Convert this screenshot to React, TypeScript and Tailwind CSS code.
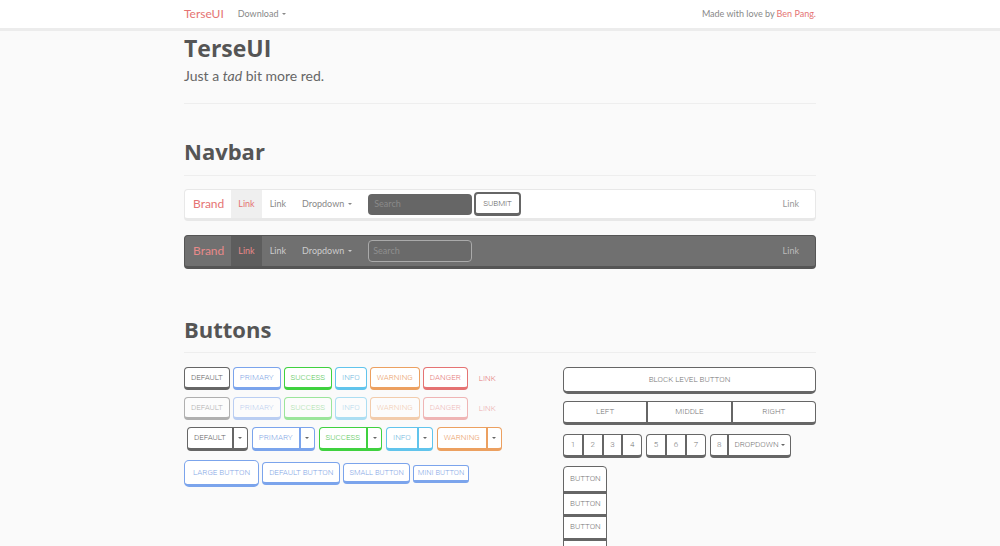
import React from "react";

const body = { fontFamily: "Lato, 'Noto Sans', sans-serif" };
const head = { fontFamily: "'Open Sans', 'Noto Sans', sans-serif" };
const btnFont = { fontFamily: "Roboto, 'Liberation Sans', sans-serif" };

const variants: Record<string, { border: string; text: string }> = {
  default: { border: "border-[#666]", text: "text-[#666]" },
  primary: { border: "border-[#7ba4ec]", text: "text-[#86a8e6]" },
  success: { border: "border-[#3fd13f]", text: "text-[#5bc95b]" },
  info: { border: "border-[#61c4ec]", text: "text-[#72b9e0]" },
  warning: { border: "border-[#eca060]", text: "text-[#eba06a]" },
  danger: { border: "border-[#e57373]", text: "text-[#e57b7b]" },
};

const sizes: Record<string, string> = {
  lg: "h-[27px] px-[8px] text-[8px] rounded-[5px]",
  md: "h-[23px] px-[6px] text-[8px] rounded-[4px]",
  sm: "h-[21px] px-[5px] text-[7.5px] rounded-[4px]",
  xs: "h-[18px] px-[4px] text-[7.5px] rounded-[3px]",
};

function Btn({
  label,
  v = "default",
  size = "md",
  faded = false,
}: {
  label: string;
  v?: string;
  size?: string;
  faded?: boolean;
}) {
  const c = variants[v];
  return (
    <button
      style={btnFont}
      className={`bg-white border-[1.5px] border-b-[3px] uppercase font-light flex items-center ${c.border} ${c.text} ${sizes[size]} ${faded ? "opacity-50" : ""}`}
    >
      {label}
    </button>
  );
}

function Caret({ className = "" }: { className?: string }) {
  return (
    <span
      className={`inline-block w-0 h-0 border-l-[2.5px] border-r-[2.5px] border-t-[2.5px] border-l-transparent border-r-transparent ${className}`}
    />
  );
}

function Split({ label, v }: { label: string; v: string }) {
  const c = variants[v];
  return (
    <div
      style={btnFont}
      className={`flex h-[24px] bg-white border-[1.5px] border-b-[3px] rounded-[4px] uppercase font-light text-[8px] ${c.border} ${c.text}`}
    >
      <span className="flex items-center px-[6px]">{label}</span>
      <span className={`flex items-center justify-center w-[15px] border-l-2 ${c.border}`}>
        <Caret className="border-t-[#666]" />
      </span>
    </div>
  );
}

function Group({ items, className = "" }: { items: React.ReactNode[]; className?: string }) {
  return (
    <div
      style={btnFont}
      className={`flex h-[24px] bg-white border-[1.5px] border-b-[3px] border-[#666] rounded-[4px] uppercase font-light text-[8px] text-[#777] ${className}`}
    >
      {items.map((it, i) => (
        <span
          key={i}
          className={`flex-1 flex items-center justify-center px-[6px] ${i > 0 ? "border-l-2 border-[#666]" : ""}`}
        >
          {it}
        </span>
      ))}
    </div>
  );
}

function DemoNav({ dark }: { dark?: boolean }) {
  return (
    <div
      style={body}
      className={
        dark
          ? "flex items-stretch h-[34px] bg-[#707070] border-[1.5px] border-b-[3px] border-[#555] rounded-[4px] text-[9px]"
          : "flex items-stretch h-[32px] bg-white border-[1.5px] border-b-[3px] border-[#e8e8e8] rounded-[4px] text-[9px]"
      }
    >
      <span className={`flex items-center pl-[8px] pr-[7px] text-[12px] ${dark ? "text-[#e88a8a]" : "text-[#e57373]"}`}>
        Brand
      </span>
      <span
        className={`flex items-center px-[7px] ${dark ? "bg-[#5d5d5d] text-[#e88a8a]" : "bg-[#efefef] text-[#e57373]"}`}
      >
        Link
      </span>
      <span className={`flex items-center px-[8px] ${dark ? "text-[#ccc]" : "text-[#888]"}`}>Link</span>
      <span className={`flex items-center gap-[4px] px-[8px] ${dark ? "text-[#ccc]" : "text-[#888]"}`}>
        Dropdown <Caret className={dark ? "border-t-[#ccc]" : "border-t-[#888]"} />
      </span>
      <div className="flex items-center gap-[2px] ml-[8px]">
        <div
          className={
            dark
              ? "w-[104px] h-[22px] rounded-[4px] bg-[#6a6a6a] border-[1.5px] border-[#aaa] flex items-center px-[4px] text-[#8f8f8f]"
              : "w-[104px] h-[21px] rounded-[4px] bg-[#666] flex items-center px-[6px] text-[#8a8a8a]"
          }
        >
          Search
        </div>
        {!dark && (
          <button
            style={btnFont}
            className="h-[24px] px-[7px] bg-white border-2 border-b-[3px] border-[#666] rounded-[4px] text-[8px] font-light text-[#666]"
          >
            SUBMIT
          </button>
        )}
      </div>
      <span className={`ml-auto flex items-center pr-[16px] ${dark ? "text-[#bbb]" : "text-[#999]"}`}>Link</span>
    </div>
  );
}

export default function App() {
  return (
    <div className="min-h-[546px] bg-[#fafafa] text-[#555]" style={body}>
      {/* TOP NAV */}
      <div className="h-[31px] bg-white border-b-[3px] border-[#ececec]">
        <div className="w-[632px] mx-auto h-full flex items-center text-[9px] text-[#888]">
          <span className="text-[12px] text-[#e57373]">TerseUI</span>
          <span className="ml-[14px] flex items-center gap-[4px]">
            Download <Caret className="border-t-[#888]" />
          </span>
          <span className="ml-auto">
            Made with love by <span className="text-[#e57373]">Ben Pang.</span>
          </span>
        </div>
      </div>

      <div className="w-[632px] mx-auto">
        {/* HEADER */}
        <h1 style={head} className="text-[23px] font-bold text-[#555] leading-[30px] mt-[2px]">
          TerseUI
        </h1>
        <p className="text-[14px] text-[#666] mt-[3px] leading-[20px]">
          Just a <em>tad</em> bit more red.
        </p>
        <div className="border-t border-[#eee] mt-[17px]" />

        {/* NAVBAR */}
        <h2 style={head} className="text-[22px] font-bold text-[#555] leading-[30px] mt-[32px]">
          Navbar
        </h2>
        <div className="border-t border-[#eee] mt-[9px]" />
        <div className="mt-[13px] flex flex-col gap-[14px]">
          <DemoNav />
          <DemoNav dark />
        </div>

        {/* BUTTONS */}
        <h2 style={head} className="text-[22px] font-bold text-[#555] leading-[30px] mt-[45px]">
          Buttons
        </h2>
        <div className="border-t border-[#eee] mt-[8px]" />

        <div className="flex mt-[14px]">
          <div className="w-[379px] flex flex-col">
            <div className="flex items-center gap-[3px]">
              <Btn label="Default" />
              <Btn label="Primary" v="primary" />
              <Btn label="Success" v="success" />
              <Btn label="Info" v="info" />
              <Btn label="Warning" v="warning" />
              <Btn label="Danger" v="danger" />
              <span style={btnFont} className="ml-[8px] text-[8px] font-light text-[#e57b7b]">
                LINK
              </span>
            </div>
            <div className="flex items-center gap-[3px] mt-[7px]">
              <Btn label="Default" faded />
              <Btn label="Primary" v="primary" faded />
              <Btn label="Success" v="success" faded />
              <Btn label="Info" v="info" faded />
              <Btn label="Warning" v="warning" faded />
              <Btn label="Danger" v="danger" faded />
              <span style={btnFont} className="ml-[8px] text-[8px] font-light text-[#e57b7b] opacity-60">
                LINK
              </span>
            </div>
            <div className="flex items-center gap-[4px] mt-[7px] ml-[3px]">
              <Split label="Default" v="default" />
              <Split label="Primary" v="primary" />
              <Split label="Success" v="success" />
              <Split label="Info" v="info" />
              <Split label="Warning" v="warning" />
            </div>
            <div className="flex items-center gap-[3px] mt-[9px]">
              <Btn label="Large button" v="primary" size="lg" />
              <Btn label="Default button" v="primary" />
              <Btn label="Small button" v="primary" size="sm" />
              <Btn label="Mini button" v="primary" size="xs" />
            </div>
          </div>

          <div className="flex-1 flex flex-col">
            <button
              style={btnFont}
              className="h-[27px] w-full bg-white border-[1.5px] border-b-[3px] border-[#666] rounded-[5px] text-[8px] font-light text-[#777] uppercase"
            >
              Block level button
            </button>
            <Group className="mt-[7px]" items={["Left", "Middle", "Right"]} />
            <div className="flex gap-[4px] mt-[9px]">
              <Group className="w-[79px]" items={["1", "2", "3", "4"]} />
              <Group className="w-[60px]" items={["5", "6", "7"]} />
              <div
                style={btnFont}
                className="flex h-[24px] bg-white border-[1.5px] border-b-[3px] border-[#666] rounded-[4px] uppercase font-light text-[8px] text-[#777]"
              >
                <span className="flex items-center px-[6px]">8</span>
                <span className="flex items-center gap-[2px] px-[5px] border-l-2 border-[#666]">
                  Dropdown <Caret className="border-t-[#666]" />
                </span>
              </div>
            </div>
            <div
              style={btnFont}
              className="mt-[8px] w-[44px] flex flex-col bg-white border-[1.5px] border-[#666] rounded-t-[4px] uppercase font-light text-[8px] text-[#777]"
            >
              {["Button", "Button", "Button", "Button"].map((b, i) => (
                <span
                  key={i}
                  className={`h-[23.5px] flex items-center px-[6px] ${i > 0 ? "border-t-[3px] border-[#666]" : ""}`}
                >
                  {b}
                </span>
              ))}
            </div>
          </div>
        </div>
      </div>
    </div>
  );
}
